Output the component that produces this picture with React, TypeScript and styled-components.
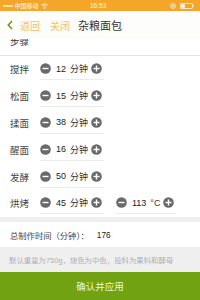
import React from 'react';
import styled, { createGlobalStyle } from 'styled-components';

const GlobalStyle = createGlobalStyle`
  html, body {
    margin: 0;
    padding: 0;
    background: #fff;
  }
  body {
    font-family: "Liberation Sans", "Noto Sans CJK SC", sans-serif;
    color: #333;
  }
`;

const Screen = styled.div`
  width: 200px;
  height: 300px;
  display: flex;
  flex-direction: column;
  overflow: hidden;
  background: #fff;
`;

const StatusBar = styled.div`
  height: 11px;
  background: #f5a52a;
  display: flex;
  align-items: center;
  justify-content: space-between;
  padding: 0 6px 0 3px;
  color: #fff;
  font-size: 6px;
  position: relative;
`;

const StatusLeft = styled.div`
  display: flex;
  align-items: center;
  gap: 2px;
`;

const StatusTime = styled.div`
  position: absolute;
  left: 90px;
  top: 0;
  line-height: 11px;
  font-size: 6.5px;
`;

const StatusRight = styled.div`
  display: flex;
  align-items: center;
  gap: 4px;
`;

const NavBar = styled.div`
  height: 28px;
  background: #fdfdfb;
  display: flex;
  align-items: center;
  padding-left: 7px;
  position: relative;
  z-index: 1;
`;

const NavLink = styled.span<{ $gap?: number }>`
  color: #f6bd64;
  font-size: 10px;
  margin-left: ${p => p.$gap ?? 0}px;
`;

const NavTitle = styled.span`
  color: #333;
  font-size: 11px;
  margin-left: 8px;
`;

const Content = styled.div`
  height: 178px;
  overflow: hidden;
`;

const SectionHeader = styled.div`
  margin-top: -10px;
  height: 26px;
  line-height: 26px;
  padding-left: 10px;
  font-size: 9.5px;
  border-bottom: 1px solid #e2e2e2;
`;

const Row = styled.div`
  height: 26.8px;
  display: flex;
  align-items: center;
  padding-left: 10px;
`;

const Label = styled.span`
  width: 30px;
  font-size: 9.5px;
  color: #444;
`;

const Stepper = styled.div<{ $width: number }>`
  width: ${p => p.$width}px;
  height: 22px;
  box-sizing: border-box;
  border-bottom: 1px solid #ebebeb;
  display: flex;
  align-items: center;
  margin-right: 12px;
`;

const Value = styled.span`
  font-size: 9px;
  color: #222;
  margin-left: 5px;
`;

const Unit = styled.span`
  font-size: 9px;
  color: #333;
  margin-left: 4px;
  margin-right: 3px;
`;

const GreyBand = styled.div`
  height: 5px;
  background: #efeff0;
`;

const TotalRow = styled.div`
  height: 25px;
  display: flex;
  align-items: center;
  padding-left: 10px;
  font-size: 8.3px;
  color: #444;
`;

const TotalValue = styled.span`
  margin-left: 8px;
  color: #222;
`;

const Hint = styled.div`
  height: 25px;
  background: #efeff0;
  display: flex;
  align-items: center;
  padding-left: 9px;
  font-size: 7.4px;
  color: #b0b0b0;
  white-space: nowrap;
`;

const ConfirmButton = styled.div`
  flex: 1;
  background: #71a211;
  color: #f2f6cf;
  font-size: 9.5px;
  display: flex;
  align-items: center;
  justify-content: center;
`;

const CircleButton = ({ plus }: { plus?: boolean }) => (
  <svg width="11" height="11" viewBox="0 0 11 11">
    <circle cx="5.5" cy="5.5" r="5.3" fill="#6a6a6a" />
    <rect x="2.5" y="4.8" width="6" height="1.4" fill="#fff" />
    {plus && <rect x="4.8" y="2.5" width="1.4" height="6" fill="#fff" />}
  </svg>
);

type StepItem = { label: string; value: number; temp?: number };

const steps: StepItem[] = [
  { label: '搅拌', value: 12 },
  { label: '松面', value: 15 },
  { label: '揉面', value: 38 },
  { label: '醒面', value: 16 },
  { label: '发酵', value: 50 },
  { label: '烘烤', value: 45, temp: 113 },
];

const App = () => {
  const total = steps.reduce((s, x) => s + x.value, 0);

  return (
    <Screen>
      <GlobalStyle />
      <StatusBar>
        <StatusLeft>
          <span style={{ letterSpacing: '-0.5px', fontSize: '4px' }}>●●●●●</span>
          <span>中国移动</span>
          <svg width="7" height="6" viewBox="0 0 7 6">
            <path d="M0.5 2 Q3.5 -0.5 6.5 2" stroke="#fff" strokeWidth="0.8" fill="none" />
            <path d="M1.7 3.3 Q3.5 1.7 5.3 3.3" stroke="#fff" strokeWidth="0.8" fill="none" />
            <circle cx="3.5" cy="5" r="0.8" fill="#fff" />
          </svg>
        </StatusLeft>
        <StatusTime>16:53</StatusTime>
        <StatusRight>
          <svg width="6" height="6" viewBox="0 0 6 6">
            <circle cx="3" cy="3" r="2.4" stroke="#fff" strokeWidth="0.8" fill="none" />
            <circle cx="3" cy="3" r="0.9" fill="#fff" />
          </svg>
          <svg width="14" height="6" viewBox="0 0 14 6">
            <rect x="0.4" y="0.4" width="12" height="5.2" rx="1" stroke="#fff" strokeWidth="0.8" fill="none" />
            <rect x="1.3" y="1.3" width="3.5" height="3.4" fill="#fff" />
            <rect x="12.6" y="2" width="1" height="2" fill="#fff" />
          </svg>
        </StatusRight>
      </StatusBar>

      <NavBar>
        <svg width="6" height="10" viewBox="0 0 6 10">
          <path d="M5 1 L1.3 5 L5 9" stroke="#6b9c1c" strokeWidth="1.6" fill="none" />
        </svg>
        <NavLink $gap={7}>返回</NavLink>
        <NavLink $gap={10}>关闭</NavLink>
        <NavTitle>杂粮面包</NavTitle>
      </NavBar>

      <Content>
        <SectionHeader>步骤</SectionHeader>
        {steps.map(step => (
          <Row key={step.label}>
            <Label>{step.label}</Label>
            <Stepper $width={64}>
              <CircleButton />
              <Value>{step.value}</Value>
              <Unit>分钟</Unit>
              <CircleButton plus />
            </Stepper>
            {step.temp !== undefined && (
              <Stepper $width={60}>
                <CircleButton />
                <Value>{step.temp}</Value>
                <Unit>°C</Unit>
                <CircleButton plus />
              </Stepper>
            )}
          </Row>
        ))}
      </Content>

      <GreyBand />
      <TotalRow>
        总制作时间（分钟）：
        <TotalValue>{total}</TotalValue>
      </TotalRow>
      <Hint>默认重量为750g，烧色为中色，投料为果料和酵母</Hint>
      <ConfirmButton>确认并应用</ConfirmButton>
    </Screen>
  );
};

export default App;
